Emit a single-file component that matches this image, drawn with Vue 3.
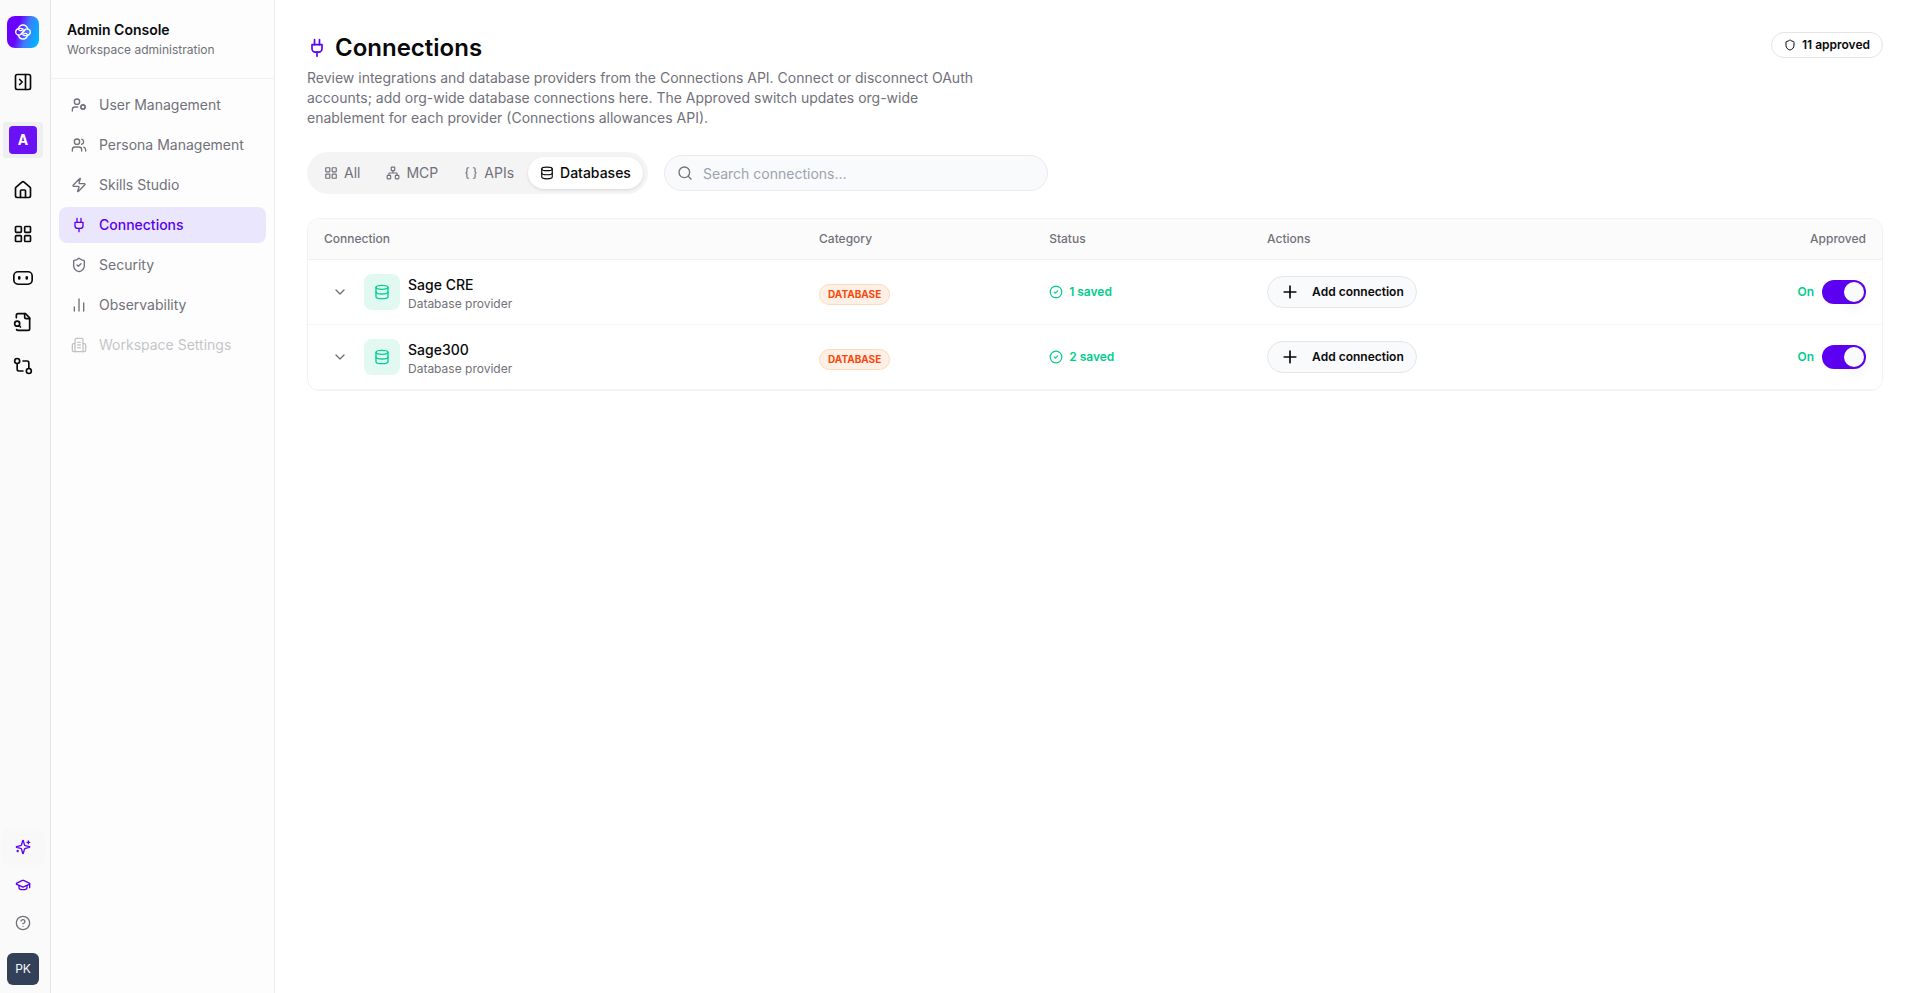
<script setup>
import { ref, computed } from 'vue'

const icons = {
  panel: '<rect width="18" height="18" x="3" y="3" rx="2"/><path d="M15 3v18"/><path d="m8 9 3 3-3 3"/>',
  home: '<path d="M15 21v-8a1 1 0 0 0-1-1h-4a1 1 0 0 0-1 1v8"/><path d="M3 10a2 2 0 0 1 .709-1.528l7-6a2 2 0 0 1 2.582 0l7 6A2 2 0 0 1 21 10v9a2 2 0 0 1-2 2H5a2 2 0 0 1-2-2z"/>',
  grid: '<rect width="7" height="7" x="3" y="3" rx="1"/><rect width="7" height="7" x="14" y="3" rx="1"/><rect width="7" height="7" x="14" y="14" rx="1"/><rect width="7" height="7" x="3" y="14" rx="1"/>',
  bot: '<rect width="22" height="15" x="1" y="4.5" rx="5"/><path d="M7.500 11v1.500M16.500 11v1.500" stroke-width="3"/>',
  fileSearch: '<path d="M14 2v4a2 2 0 0 0 2 2h4"/><path d="M4.268 21a2 2 0 0 0 1.727 1H18a2 2 0 0 0 2-2V7l-5-5H6a2 2 0 0 0-2 2v3"/><path d="m9 18-1.500-1.500"/><circle cx="5" cy="14" r="3"/>',
  compare: '<circle cx="5" cy="6" r="3"/><path d="M12 6h5a2 2 0 0 1 2 2v7"/><circle cx="19" cy="18" r="3"/><path d="M12 18H7a2 2 0 0 1-2-2V9"/>',
  sparkles: '<path d="M9.937 15.500A2 2 0 0 0 8.500 14.063l-6.135-1.582a.5.5 0 0 1 0-.962L8.500 9.936A2 2 0 0 0 9.937 8.500l1.582-6.135a.5.5 0 0 1 .963 0L14.063 8.500A2 2 0 0 0 15.500 9.937l6.135 1.581a.5.5 0 0 1 0 .964L15.500 14.063a2 2 0 0 0-1.437 1.437l-1.582 6.135a.5.5 0 0 1-.963 0z"/><path d="M20 3v4M22 5h-4M4 17v2M5 18H3"/>',
  cap: '<path d="M21.420 10.922a1 1 0 0 0-.019-1.838L12.830 5.180a2 2 0 0 0-1.660 0L2.600 9.080a1 1 0 0 0 0 1.832l8.570 3.908a2 2 0 0 0 1.660 0z"/><path d="M22 10v6"/><path d="M6 12.500V16a6 3 0 0 0 12 0v-3.500"/>',
  help: '<circle cx="12" cy="12" r="10"/><path d="M9.090 9a3 3 0 0 1 5.830 1c0 2-3 3-3 3"/><path d="M12 17h.01"/>',
  userCog: '<circle cx="18" cy="15" r="3"/><circle cx="9" cy="7" r="4"/><path d="M10 15H6a4 4 0 0 0-4 4v2"/><path d="m21.700 16.400-.9-.3M15.200 13.900l-.9-.3M16.600 18.700l.3-.9M19.100 12.200l.3-.9M19.600 18.700l-.4-1M16.800 12.300l-.4-1M14.300 16.600l1-.4M20.700 13.800l1-.4"/>',
  users: '<path d="M16 21v-2a4 4 0 0 0-4-4H6a4 4 0 0 0-4 4v2"/><circle cx="9" cy="7" r="4"/><path d="M22 21v-2a4 4 0 0 0-3-3.870M16 3.130a4 4 0 0 1 0 7.750"/>',
  zap: '<path d="M4 14a1 1 0 0 1-.780-1.630l9.900-10.200a.5.5 0 0 1 .860.460l-1.920 6.020A1 1 0 0 0 13 10h7a1 1 0 0 1 .780 1.630l-9.900 10.200a.5.5 0 0 1-.860-.460l1.920-6.020A1 1 0 0 0 11 14z"/>',
  plug: '<path d="M12 22v-5M9 8V2M15 8V2"/><path d="M18 8v5a4 4 0 0 1-4 4h-4a4 4 0 0 1-4-4V8Z"/>',
  shieldCheck: '<path d="M20 13c0 5-3.500 7.500-7.660 8.950a1 1 0 0 1-.670-.010C7.500 20.500 4 18 4 13V6a1 1 0 0 1 1-1c2 0 4.500-1.200 6.240-2.720a1.170 1.170 0 0 1 1.520 0C14.510 3.810 17 5 19 5a1 1 0 0 1 1 1z"/><path d="m9 12 2 2 4-4"/>',
  shield: '<path d="M20 13c0 5-3.500 7.500-7.660 8.950a1 1 0 0 1-.670-.010C7.500 20.500 4 18 4 13V6a1 1 0 0 1 1-1c2 0 4.500-1.200 6.240-2.720a1.170 1.170 0 0 1 1.520 0C14.510 3.810 17 5 19 5a1 1 0 0 1 1 1z"/>',
  chart: '<path d="M5 21v-6M12 21V3M19 21V9"/>',
  building: '<path d="M10 12h4M10 8h4M10 16h4"/><path d="M6 10H4a2 2 0 0 0-2 2v8a2 2 0 0 0 2 2h16a2 2 0 0 0 2-2v-8a2 2 0 0 0-2-2h-2"/><path d="M6 22V4a2 2 0 0 1 2-2h8a2 2 0 0 1 2 2v18"/>',
  network: '<rect x="16" y="16" width="6" height="6" rx="1"/><rect x="2" y="16" width="6" height="6" rx="1"/><rect x="9" y="2" width="6" height="6" rx="1"/><path d="M5 16v-3a1 1 0 0 1 1-1h12a1 1 0 0 1 1 1v3M12 12V8"/>',
  braces: '<path d="M8 3H7a2 2 0 0 0-2 2v5a2 2 0 0 1-2 2 2 2 0 0 1 2 2v5a2 2 0 0 0 2 2h1"/><path d="M16 21h1a2 2 0 0 0 2-2v-5a2 2 0 0 1 2-2 2 2 0 0 1-2-2V5a2 2 0 0 0-2-2h-1"/>',
  database: '<ellipse cx="12" cy="5" rx="9" ry="3"/><path d="M3 5v14a9 3 0 0 0 18 0V5"/><path d="M3 12a9 3 0 0 0 18 0"/>',
  search: '<circle cx="11" cy="11" r="8"/><path d="m21 21-4.300-4.300"/>',
  chevron: '<path d="m6 9 6 6 6-6"/>',
  check: '<circle cx="12" cy="12" r="10"/><path d="m9 12 2 2 4-4"/>',
  plus: '<path d="M5 12h14M12 5v14"/>',
}

const railItems = [
  { icon: 'home', label: 'Home' },
  { icon: 'grid', label: 'Apps' },
  { icon: 'bot', label: 'Agents' },
  { icon: 'fileSearch', label: 'Documents' },
  { icon: 'compare', label: 'Workflows' },
]
const navItems = [
  { icon: 'userCog', label: 'User Management' },
  { icon: 'users', label: 'Persona Management' },
  { icon: 'zap', label: 'Skills Studio' },
  { icon: 'plug', label: 'Connections', active: true },
  { icon: 'shieldCheck', label: 'Security' },
  { icon: 'chart', label: 'Observability' },
  { icon: 'building', label: 'Workspace Settings', disabled: true },
]
const tabs = [
  { icon: 'grid', label: 'All' },
  { icon: 'network', label: 'MCP' },
  { icon: 'braces', label: 'APIs' },
  { icon: 'database', label: 'Databases' },
]
const activeTab = ref('Databases')
const query = ref('')
const rows = ref([
  { name: 'Sage CRE', saved: 1, on: true },
  { name: 'Sage300', saved: 2, on: true },
])
const visibleRows = computed(() =>
  rows.value.filter((r) => r.name.toLowerCase().includes(query.value.toLowerCase()))
)
</script>

<template>
  <div class="app">
    <aside class="rail">
      <a class="logo" href="#" aria-label="Start page">
        <svg viewBox="0 0 24 24" class="icon s16">
          <path d="M5 7.500C6 3.500 9 1.500 12 1.500s6 2 7 6M5 16.500c1 4 4 6 7 6s6-2 7-6" />
          <path d="M12 7.500C8.500 5.500 1 6.500 1 12c0 5 5.500 5.500 8 3.500l6-6.500" />
          <path d="M12 16.500c3.500 2 11 1 11-4.500 0-5-5.500-5.500-8-3.500L9 15" />
          <path d="M5 7.500c1 2.500 4 3.500 7 1M19 16.500c-1-2.500-4-3.500-7-1" />
        </svg>
      </a>
      <button class="rail-btn toggle" aria-label="Expand sidebar"><svg viewBox="0 0 24 24" class="icon s20" v-html="icons.panel" /></button>
      <button class="workspace" aria-label="Workspace A"><span>A</span></button>
      <nav class="rail-nav" aria-label="Main">
        <a v-for="item in railItems" :key="item.icon" href="#" class="rail-btn" :aria-label="item.label">
          <svg viewBox="0 0 24 24" class="icon s20" v-html="icons[item.icon]" />
        </a>
      </nav>
      <div class="rail-foot">
        <button class="foot-btn tinted" aria-label="Assistant"><svg viewBox="0 0 24 24" class="icon s16" v-html="icons.sparkles" /></button>
        <button class="foot-btn" aria-label="Learn"><svg viewBox="0 0 24 24" class="icon s16" v-html="icons.cap" /></button>
        <button class="foot-btn muted" aria-label="Help"><svg viewBox="0 0 24 24" class="icon s16" v-html="icons.help" /></button>
        <button class="avatar">PK</button>
      </div>
    </aside>

    <aside class="side">
      <header class="side-head">
        <h2>Admin Console</h2>
        <p>Workspace administration</p>
      </header>
      <nav class="side-nav" aria-label="Admin">
        <a
          v-for="item in navItems"
          :key="item.label"
          href="#"
          :class="['nav-item', { active: item.active, disabled: item.disabled }]"
        >
          <svg viewBox="0 0 24 24" class="icon s16" v-html="icons[item.icon]" />
          <span>{{ item.label }}</span>
        </a>
      </nav>
    </aside>

    <main class="main">
      <header class="page-head">
        <div class="intro">
          <h1><svg viewBox="0 0 24 24" class="icon s20" v-html="icons.plug" />Connections</h1>
          <p>
            Review integrations and database providers from the Connections API. Connect or disconnect OAuth
            accounts; add org-wide database connections here. The Approved switch updates org-wide
            enablement for each provider (Connections allowances API).
          </p>
        </div>
        <span class="approved-pill"><svg viewBox="0 0 24 24" class="icon s12" v-html="icons.shield" />11 approved</span>
      </header>

      <div class="toolbar">
        <div class="tabs" role="tablist">
          <button
            v-for="tab in tabs"
            :key="tab.label"
            role="tab"
            :aria-selected="activeTab === tab.label"
            :class="['tab', { active: activeTab === tab.label }]"
            @click="activeTab = tab.label"
          >
            <svg viewBox="0 0 24 24" class="icon s14" v-html="icons[tab.icon]" />{{ tab.label }}
          </button>
        </div>
        <label class="search">
          <svg viewBox="0 0 24 24" class="icon s16" v-html="icons.search" />
          <input v-model="query" type="text" placeholder="Search connections..." aria-label="Search connections" />
        </label>
      </div>

      <div class="card">
        <table>
          <thead>
            <tr>
              <th class="c-name">Connection</th>
              <th class="c-cat">Category</th>
              <th class="c-status">Status</th>
              <th class="c-actions">Actions</th>
              <th class="c-approved">Approved</th>
            </tr>
          </thead>
          <tbody>
            <tr v-for="row in visibleRows" :key="row.name">
              <td>
                <div class="conn">
                  <button class="expand" :aria-label="`Expand ${row.name}`"><svg viewBox="0 0 24 24" class="icon s16" v-html="icons.chevron" /></button>
                  <span class="tile"><svg viewBox="0 0 24 24" class="icon s16" v-html="icons.database" /></span>
                  <div class="label">
                    <div class="name">{{ row.name }}</div>
                    <div class="kind">Database provider</div>
                  </div>
                </div>
              </td>
              <td class="badge-cell"><span class="badge">DATABASE</span></td>
              <td>
                <span class="status"><svg viewBox="0 0 24 24" class="icon s14" v-html="icons.check" />{{ row.saved }} saved</span>
              </td>
              <td>
                <button class="add"><svg viewBox="0 0 24 24" class="icon s20" v-html="icons.plus" />Add connection</button>
              </td>
              <td>
                <label class="switch">
                  <span>{{ row.on ? 'On' : 'Off' }}</span>
                  <input v-model="row.on" type="checkbox" role="switch" :aria-label="`${row.name} approved`" />
                </label>
              </td>
            </tr>
          </tbody>
        </table>
      </div>
    </main>
  </div>
</template>

<style>
body {
  margin: 0;
  background: #fff;
}
</style>

<style scoped>
* {
  box-sizing: border-box;
}
.app {
  display: flex;
  min-height: 100vh;
  font-family: Inter, "Liberation Sans", sans-serif;
  font-size: 14px;
  line-height: 20px;
  color: #09090b;
}
button,
input {
  margin: 0;
  padding: 0;
  border: 0;
  background: none;
  font: inherit;
  color: inherit;
}
button {
  cursor: pointer;
}
a {
  color: inherit;
  text-decoration: none;
}
h1,
h2,
p {
  margin: 0;
}
.icon {
  display: block;
  flex: none;
  fill: none;
  stroke: currentColor;
  stroke-width: 2;
  stroke-linecap: round;
  stroke-linejoin: round;
}
.s12 { width: 12px; height: 12px; }
.s14 { width: 14px; height: 14px; }
.s16 { width: 16px; height: 16px; }
.s20 { width: 20px; height: 20px; }

.rail {
  flex: none;
  display: flex;
  flex-direction: column;
  align-items: center;
  width: 51px;
  padding: 16px 4px 8px 0;
  border-right: 1px solid #e4e4e7;
  background: #fafafa;
}
.logo {
  display: grid;
  place-items: center;
  width: 32px;
  height: 32px;
  border-radius: 8px;
  background: linear-gradient(105deg, #6a00ff 34%, #3f7bff 60%, #00b4ff 90%);
  color: #fff;
}
.rail-btn {
  display: grid;
  place-items: center;
  width: 36px;
  height: 36px;
}
.toggle {
  margin-top: 16px;
}
.workspace {
  display: grid;
  place-items: center;
  width: 40px;
  height: 36px;
  margin-top: 22px;
  border-radius: 4px;
  background: #eeeff1;
}
.workspace span {
  display: grid;
  place-items: center;
  width: 28px;
  height: 28px;
  border-radius: 4px;
  background: #6a11f5;
  color: #fff;
  font-weight: 700;
}
.rail-nav {
  display: flex;
  flex-direction: column;
  gap: 8px;
  margin-top: 14px;
}
.rail-foot {
  display: flex;
  flex-direction: column;
  align-items: center;
  gap: 2px;
  margin-top: auto;
}
.foot-btn {
  display: grid;
  place-items: center;
  width: 44px;
  height: 36px;
  border-radius: 8px;
  color: #5b00f0;
}
.foot-btn.tinted {
  background: #f8f8f9;
}
.foot-btn.muted {
  color: #71717a;
}
.avatar {
  width: 32px;
  height: 32px;
  margin-top: 10px;
  border-radius: 6px;
  background: #334158;
  color: #f8fafc;
  font-size: 12px;
}

.side {
  flex: none;
  width: 224px;
  border-right: 1px solid #ececee;
  background: #fdfdfd;
}
.side-head {
  padding: 20px 16px;
  border-bottom: 1px solid #f1f1f3;
}
.side-head h2 {
  font-size: 14px;
  line-height: 20px;
  font-weight: 600;
}
.side-head p {
  margin-top: 2px;
  font-size: 12px;
  line-height: 16px;
  color: #71717a;
}
.side-nav {
  display: flex;
  flex-direction: column;
  gap: 4px;
  padding: 8px;
}
.nav-item {
  display: flex;
  align-items: center;
  gap: 12px;
  height: 36px;
  padding: 0 12px;
  border-radius: 8px;
  color: #71717a;
}
.nav-item.active {
  background: #e9e6fd;
  color: #5b00f0;
  font-weight: 500;
}
.nav-item.disabled {
  opacity: 0.4;
}

.main {
  flex: 1;
  min-width: 0;
  padding: 32px 27px 32px 32px;
}
.page-head {
  display: flex;
  align-items: flex-start;
  justify-content: space-between;
}
.intro {
  max-width: 672px;
}
.intro h1 {
  display: flex;
  align-items: center;
  gap: 8px;
  font-size: 24px;
  line-height: 32px;
  font-weight: 600;
}
.intro h1 .icon {
  color: #5b00f0;
}
.intro p {
  margin-top: 4px;
  color: #71717a;
}
.approved-pill {
  display: flex;
  align-items: center;
  gap: 6px;
  padding: 4px 12px;
  border: 1px solid #e4e4e7;
  border-radius: 13px;
  font-size: 12px;
  line-height: 16px;
  font-weight: 600;
}
.toolbar {
  display: flex;
  align-items: center;
  gap: 16px;
  margin-top: 24px;
}
.tabs {
  display: flex;
  gap: 2px;
  padding: 5px;
  border-radius: 21px;
  background: #f4f4f5;
}
.tab {
  display: flex;
  align-items: center;
  gap: 6px;
  height: 32px;
  padding: 0 12px;
  border-radius: 16px;
  color: #71717a;
  font-weight: 400;
}
.tab.active {
  background: #fff;
  color: #09090b;
  font-weight: 500;
  box-shadow: 0 1px 3px rgba(0, 0, 0, 0.12);
}
.search {
  display: flex;
  align-items: center;
  gap: 10px;
  width: 384px;
  height: 36px;
  padding: 0 12px;
  border: 1px solid #e9eaee;
  border-radius: 18px;
  background: #f9fafc;
  color: #71717a;
}
.search input {
  flex: 1;
  min-width: 0;
  padding-top: 2px;
  outline: 0;
  color: #09090b;
}
.search input::placeholder {
  color: #9ca3af;
  opacity: 1;
}
.card {
  margin-top: 24px;
  border: 1px solid #f1f1f3;
  border-radius: 12px;
  overflow: hidden;
}
table {
  width: 100%;
  table-layout: fixed;
  border-collapse: separate;
  border-spacing: 0;
}
th {
  height: 41px;
  padding: 0 16px;
  background: #fbfbfb;
  border-bottom: 1px solid #f1f1f3;
  color: #71717a;
  font-size: 12px;
  font-weight: 500;
  text-align: left;
}
.c-name { width: 31.450%; }
.c-cat { width: 14.620%; }
.c-status { width: 13.850%; }
.c-actions { width: 24%; }
.c-approved { text-align: right; }
td {
  height: 65px;
  padding: 0 16px;
  border-bottom: 1px solid #f6f6f7;
  vertical-align: middle;
}
.conn {
  display: flex;
  align-items: center;
  gap: 8px;
}
.expand {
  display: grid;
  place-items: center;
  width: 32px;
  height: 32px;
  color: #71717a;
}
.tile {
  display: grid;
  place-items: center;
  width: 36px;
  height: 36px;
  border-radius: 8px;
  background: #e2f9f1;
  color: #00d093;
}
.label {
  padding-top: 3px;
}
.name {
  font-weight: 500;
}
.kind {
  margin-top: 1px;
  font-size: 12px;
  line-height: 16px;
  color: #71717a;
}
.badge-cell {
  padding-top: 4px;
}
.badge {
  display: block;
  width: fit-content;
  padding: 2px 8px;
  border: 1px solid #fdd9bd;
  border-radius: 11px;
  background: #fff0e5;
  color: #f9480c;
  font-size: 10px;
  line-height: 15px;
  font-weight: 700;
}
.status {
  display: flex;
  align-items: center;
  gap: 6px;
  color: #00ce8d;
  font-size: 12px;
  font-weight: 600;
}
.add {
  display: flex;
  align-items: center;
  gap: 12px;
  height: 32px;
  padding: 0 12px;
  border: 1px solid #e4e6ea;
  border-radius: 16px;
  background: #f9fafc;
  font-size: 12px;
  font-weight: 600;
  white-space: nowrap;
}
.switch {
  display: flex;
  align-items: center;
  justify-content: flex-end;
  gap: 8px;
  color: #00ce8d;
  font-size: 12px;
  font-weight: 600;
}
.switch input {
  appearance: none;
  display: flex;
  width: 44px;
  height: 24px;
  padding: 2px;
  border-radius: 12px;
  background: #d4d4d8;
  cursor: pointer;
}
.switch input::before {
  content: "";
  width: 20px;
  height: 20px;
  border-radius: 10px;
  background: #f8fafc;
  box-shadow: 0 8px 12px rgba(0, 0, 0, 0.05);
}
.switch input:checked {
  justify-content: flex-end;
  background: #5b00f0;
}
</style>
